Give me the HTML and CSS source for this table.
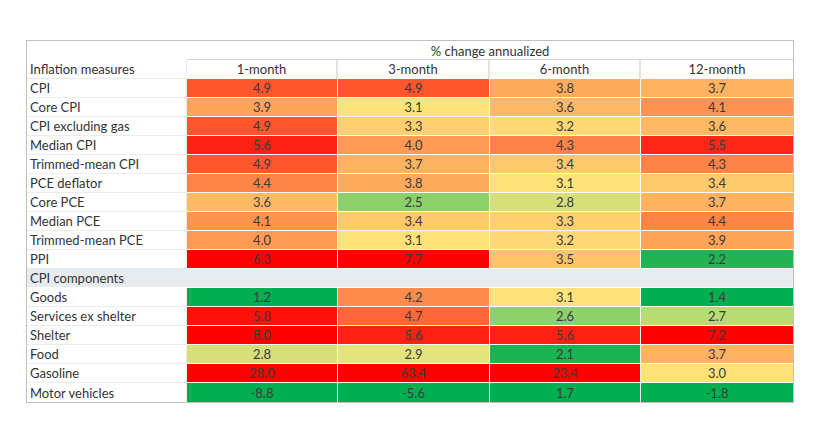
FILE: index.html
```html
<!DOCTYPE html>
<html lang="en">
<head>
<meta charset="utf-8">
<title>Inflation measures</title>
<link rel="stylesheet" href="styles.css">
</head>
<body>
<div class="frame">
<table class="tbl">
<colgroup>
<col class="c-lbl"><col class="c-a"><col class="c-b"><col class="c-a"><col class="c-b">
</colgroup>
<thead>
<tr class="h1"><th class="blank"></th><th class="group" colspan="4">% change annualized</th></tr>
<tr class="h2"><th class="lbl">Inflation measures</th><th class="hc">1-month</th><th class="hc">3-month</th><th class="hc">6-month</th><th class="hc last">12-month</th></tr>
</thead>
<tbody>
<tr><td class="lbl">CPI</td><td class="v" style="background:rgb(255,86,46)">4.9</td><td class="v" style="background:rgb(255,86,46)">4.9</td><td class="v" style="background:rgb(255,171,93)">3.8</td><td class="v last" style="background:rgb(255,179,97)">3.7</td></tr>
<tr><td class="lbl">Core CPI</td><td class="v" style="background:rgb(255,164,88)">3.9</td><td class="v" style="background:rgb(255,226,122)">3.1</td><td class="v" style="background:rgb(255,185,101)">3.6</td><td class="v last" style="background:rgb(255,148,80)">4.1</td></tr>
<tr><td class="lbl">CPI excluding gas</td><td class="v" style="background:rgb(255,86,46)">4.9</td><td class="v" style="background:rgb(255,208,114)">3.3</td><td class="v" style="background:rgb(255,217,118)">3.2</td><td class="v last" style="background:rgb(255,185,101)">3.6</td></tr>
<tr><td class="lbl">Median CPI</td><td class="v" style="background:rgb(255,33,20)">5.6</td><td class="v" style="background:rgb(255,155,84)">4.0</td><td class="v" style="background:rgb(255,130,72)">4.3</td><td class="v last" style="background:rgb(255,40,24)">5.5</td></tr>
<tr><td class="lbl">Trimmed-mean CPI</td><td class="v" style="background:rgb(255,86,46)">4.9</td><td class="v" style="background:rgb(255,179,97)">3.7</td><td class="v" style="background:rgb(255,201,109)">3.4</td><td class="v last" style="background:rgb(255,130,72)">4.3</td></tr>
<tr><td class="lbl">PCE deflator</td><td class="v" style="background:rgb(255,132,72)">4.4</td><td class="v" style="background:rgb(255,171,93)">3.8</td><td class="v" style="background:rgb(255,226,122)">3.1</td><td class="v last" style="background:rgb(255,201,109)">3.4</td></tr>
<tr><td class="lbl">Core PCE</td><td class="v" style="background:rgb(255,185,101)">3.6</td><td class="v" style="background:rgb(140,208,106)">2.5</td><td class="v" style="background:rgb(214,223,122)">2.8</td><td class="v last" style="background:rgb(255,179,97)">3.7</td></tr>
<tr><td class="lbl">Median PCE</td><td class="v" style="background:rgb(255,148,80)">4.1</td><td class="v" style="background:rgb(255,201,109)">3.4</td><td class="v" style="background:rgb(255,208,114)">3.3</td><td class="v last" style="background:rgb(255,132,72)">4.4</td></tr>
<tr><td class="lbl">Trimmed-mean PCE</td><td class="v" style="background:rgb(255,155,84)">4.0</td><td class="v" style="background:rgb(255,226,122)">3.1</td><td class="v" style="background:rgb(255,217,118)">3.2</td><td class="v last" style="background:rgb(255,164,88)">3.9</td></tr>
<tr><td class="lbl">PPI</td><td class="v" style="background:rgb(255,0,0)">6.3</td><td class="v" style="background:rgb(255,0,0)">7.7</td><td class="v" style="background:rgb(255,195,105)">3.5</td><td class="v last" style="background:rgb(35,179,83)">2.2</td></tr>
<tr class="section"><td colspan="5">CPI components</td></tr>
<tr><td class="lbl">Goods</td><td class="v" style="background:rgb(0,176,80)">1.2</td><td class="v" style="background:rgb(255,140,76)">4.2</td><td class="v" style="background:rgb(255,226,122)">3.1</td><td class="v last" style="background:rgb(0,176,80)">1.4</td></tr>
<tr><td class="lbl">Services ex shelter</td><td class="v" style="background:rgb(255,16,8)">5.8</td><td class="v" style="background:rgb(255,103,58)">4.7</td><td class="v" style="background:rgb(142,208,107)">2.6</td><td class="v last" style="background:rgb(185,219,116)">2.7</td></tr>
<tr><td class="lbl">Shelter</td><td class="v" style="background:rgb(255,0,0)">8.0</td><td class="v" style="background:rgb(255,33,20)">5.6</td><td class="v" style="background:rgb(255,33,20)">5.6</td><td class="v last" style="background:rgb(255,0,0)">7.2</td></tr>
<tr><td class="lbl">Food</td><td class="v" style="background:rgb(214,223,122)">2.8</td><td class="v" style="background:rgb(228,228,125)">2.9</td><td class="v" style="background:rgb(26,180,84)">2.1</td><td class="v last" style="background:rgb(255,179,97)">3.7</td></tr>
<tr><td class="lbl">Gasoline</td><td class="v" style="background:rgb(255,0,0)">28.0</td><td class="v" style="background:rgb(255,0,0)">63.4</td><td class="v" style="background:rgb(255,0,0)">23.4</td><td class="v last" style="background:rgb(255,226,122)">3.0</td></tr>
<tr class="lastrow"><td class="lbl">Motor vehicles</td><td class="v" style="background:rgb(0,176,80)">-8.8</td><td class="v" style="background:rgb(0,176,80)">-5.6</td><td class="v" style="background:rgb(0,176,80)">1.7</td><td class="v last" style="background:rgb(0,176,80)">-1.8</td></tr>
</tbody>
</table>
</div>
</body>
</html>
```

FILE: styles.css
```css
html, body {
  margin: 0;
  padding: 0;
  background: #ffffff;
}

body {
  font-family: Lato, "Open Sans", "Liberation Sans", sans-serif;
  font-size: 13px;
  color: #333333;
}

.frame {
  width: 766px;
  margin: 40px 0 0 26px;
  border: 1px solid #c0c0c0;
}

.tbl {
  width: 766px;
  table-layout: fixed;
  border-collapse: separate;
  border-spacing: 0;
}

.c-lbl { width: 160px; }
.c-a { width: 151px; }
.c-b { width: 152px; }

.tbl th,
.tbl td {
  padding: 0;
  font-weight: normal;
  white-space: nowrap;
  overflow: hidden;
  vertical-align: middle;
  line-height: 18px;
  height: 18px;
}

.tbl tr { height: 19px; }
.tbl tr.h1 { height: 18px; }

.h1 th {
  line-height: 15px;
  height: 14px;
  padding-top: 3px;
  padding-bottom: 0;
}

.h1 .group {
  text-align: center;
  border-bottom: 1px solid #d4d4d4;
}

.h1 .blank {
  border-bottom: 1px solid transparent;
}

.h2 .hc {
  text-align: center;
  border-right: 2px solid #e2e2e2;
  height: 19px;
  line-height: 19px;
}

.h2 .hc.last { border-right: 0; }

.lbl {
  text-align: left;
  padding-left: 3px !important;
  border-right: 1px solid #ececec;
  border-bottom: 1px solid #ececec;
}

.v {
  text-align: center;
  color: #3a3a3a;
  border-right: 1px solid #ffffff;
  border-bottom: 1px solid #ffffff;
  padding-top: 1px !important;
  line-height: 17px !important;
  height: 17px !important;
}

.v.last { border-right: 0; }

.lastrow td { border-bottom: 0; height: 19px; }
.lastrow td.v { height: 18px !important; }

.section td {
  background: #e5ebee;
  padding-left: 3px;
  border-bottom: 1px solid #ffffff;
}
```
